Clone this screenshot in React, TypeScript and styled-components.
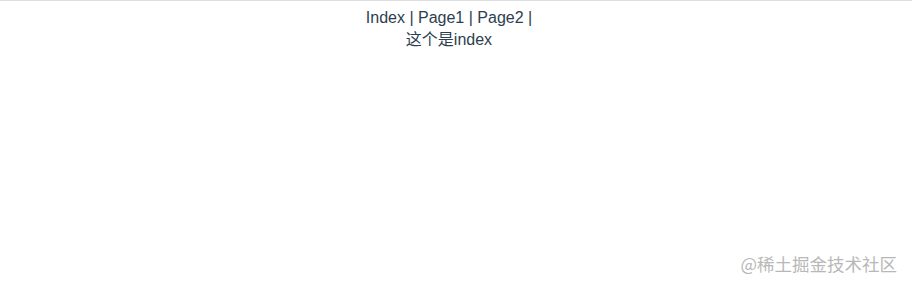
import styled, { createGlobalStyle } from "styled-components";

const GlobalStyle = createGlobalStyle`
  html, body {
    margin: 0;
    padding: 0;
    background: #fff;
  }
`;

const links = ["Index", "Page1", "Page2"];

const App = () => {
  return (
    <>
      <GlobalStyle />
      <Page>
        <Main>
          <Nav>
            {links.map((name) => (
              <span key={name}>
                <NavLink href="#">{name}</NavLink> |{" "}
              </span>
            ))}
          </Nav>
          <Content>这个是index</Content>
        </Main>
        <Watermark>@稀土掘金技术社区</Watermark>
      </Page>
    </>
  );
};

export default App;

const Page = styled.div`
  position: relative;
  height: 290px;
  box-sizing: border-box;
  border-top: 1px solid #dedede;
  padding-top: 6px;
  font-family: "Liberation Sans", "Noto Sans CJK SC", sans-serif;
  font-size: 16px;
  line-height: 22px;
  color: #2c3e50;
`;

// content area stops short of the right edge (scrollbar gutter in the original)
const Main = styled.div`
  margin-right: 14px;
  text-align: center;
`;

const Nav = styled.div`
  color: #2c3e50;
`;

const NavLink = styled.a`
  color: #2c3e50;
  text-decoration: none;
`;

const Content = styled.div`
  color: #2c3e50;
`;

const Watermark = styled.div`
  position: absolute;
  right: 15px;
  bottom: 16px;
  font-size: 17.5px;
  line-height: 20px;
  color: #b8b8b8;
  font-family: "Noto Sans CJK SC", sans-serif;
`;
